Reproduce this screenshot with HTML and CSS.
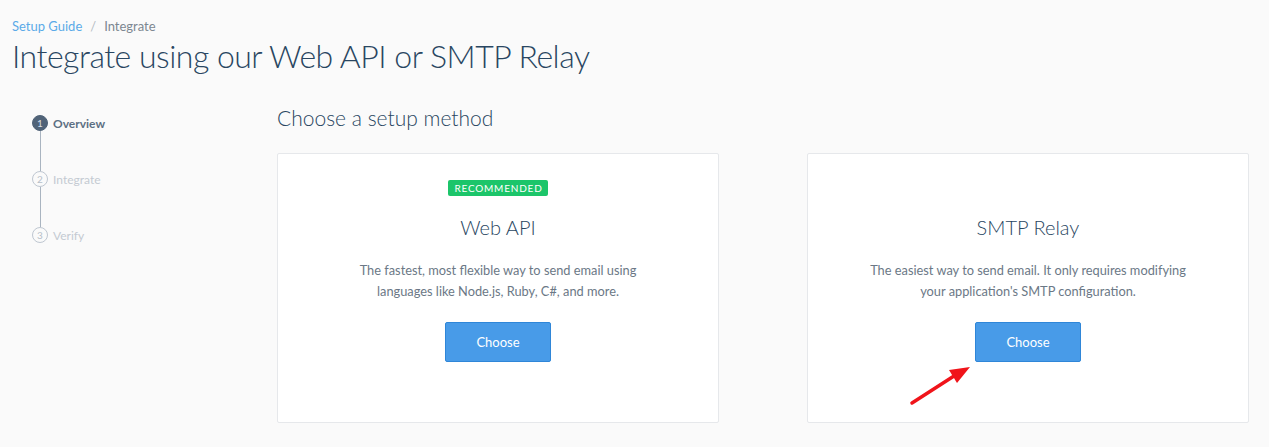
FILE: index.html
```html
<!DOCTYPE html>
<html>
<head>
<meta charset="utf-8">
<link rel="stylesheet" href="styles.css">
</head>
<body>
<div class="page">
  <nav class="breadcrumb"><a class="crumb-link">Setup Guide</a><span class="sep">/</span><span class="crumb-current">Integrate</span></nav>
  <h1 class="title">Integrate using our Web API or SMTP Relay</h1>
  <div class="main">
    <aside class="steps">
      <div class="step active"><span class="num">1</span><span class="label">Overview</span></div>
      <div class="connector"></div>
      <div class="step"><span class="num">2</span><span class="label">Integrate</span></div>
      <div class="connector"></div>
      <div class="step"><span class="num">3</span><span class="label">Verify</span></div>
    </aside>
    <section class="content">
      <h2 class="subtitle">Choose a setup method</h2>
      <div class="cards">
        <div class="card">
          <div class="badge-slot"><span class="badge">RECOMMENDED</span></div>
          <h3 class="card-title">Web API</h3>
          <p class="card-desc">The fastest, most flexible way to send email using<br>languages like Node.js, Ruby, C#, and more.</p>
          <button class="btn">Choose</button>
        </div>
        <div class="card">
          <div class="badge-slot"></div>
          <h3 class="card-title">SMTP Relay</h3>
          <p class="card-desc">The easiest way to send email. It only requires modifying<br>your application's SMTP configuration.</p>
          <button class="btn">Choose</button>
          <svg class="arrow" width="75" height="48" viewBox="0 0 75 48">
            <line x1="10" y1="42" x2="52" y2="15" stroke="#f0141a" stroke-width="3.5" stroke-linecap="round"/>
            <polygon points="68,6 47,9 55,22" fill="#f0141a"/>
          </svg>
        </div>
      </div>
    </section>
  </div>
</div>
</body>
</html>
```
FILE: styles.css
```css
* { box-sizing: border-box; }
html, body { margin: 0; padding: 0; }
body {
  background: #fafafa;
  font-family: Lato, "Open Sans", sans-serif;
  color: #294661;
  width: 1269px;
  height: 447px;
  overflow: hidden;
}
.page { padding: 18px 0 0 12px; }
.breadcrumb { font-size: 13px; line-height: 16px; height: 16px; }
.crumb-link { color: #5aaae8; }
.sep { color: #b5bcc4; margin: 0 8px; }
.crumb-current { color: #7d8791; }
.title {
  margin: 2px 0 0 0;
  font-size: 32px;
  line-height: 40px;
  font-weight: 300;
  letter-spacing: -0.5px;
  color: #294661;
}
.main { display: flex; margin-top: 28px; }
.steps { width: 265px; padding: 11px 0 0 20px; flex: none; }
.step { display: flex; align-items: center; height: 16px; }
.num {
  width: 16px; height: 16px; border-radius: 50%;
  border: 1px solid #bfc7d1;
  color: #b7bfc9;
  font-size: 10px; line-height: 14px; text-align: center;
  flex: none;
}
.label { margin-left: 5px; font-size: 12px; color: #c4cad2; }
.step.active .num { background: #506378; border-color: #506378; color: #d9dee4; }
.step.active .label { color: #5c6f83; font-weight: 700; }
.connector { width: 1px; height: 40px; background: #a9b4c0; margin-left: 7.5px; }
.content { flex: none; }
.subtitle {
  margin: 0;
  font-size: 21px;
  line-height: 28px;
  font-weight: 300;
  color: #294661;
}
.cards {
  display: grid;
  grid-template-columns: 442px 442px;
  column-gap: 88px;
  margin-top: 21px;
}
.card {
  position: relative;
  height: 270px;
  background: #fff;
  border: 1px solid #e6e8eb;
  border-radius: 2px;
  display: flex;
  flex-direction: column;
  align-items: center;
  padding-top: 26px;
}
.badge-slot { height: 16px; display: flex; justify-content: center; }
.badge {
  background: #1cc56a;
  color: #fff;
  font-size: 10px;
  line-height: 16px;
  letter-spacing: 0.8px;
  padding: 0 5px 0 6px;
  border-radius: 2px;
  font-weight: 400;
}
.card-title {
  margin: 17px 0 0 0;
  font-size: 20px;
  line-height: 28px;
  font-weight: 300;
  color: #294661;
}
.card-desc {
  margin: 19px 0 0 0;
  font-size: 12.8px;
  line-height: 21px;
  color: #6b7886;
  text-align: center;
}
.btn {
  margin-top: 20px;
  width: 106px;
  height: 40px;
  background: #489be8;
  border: 1px solid #2f86d8;
  border-radius: 2px;
  color: #fff;
  font-family: Lato, "Open Sans", sans-serif;
  font-size: 13px;
}
.arrow { position: absolute; left: 94px; top: 207px; }
```
